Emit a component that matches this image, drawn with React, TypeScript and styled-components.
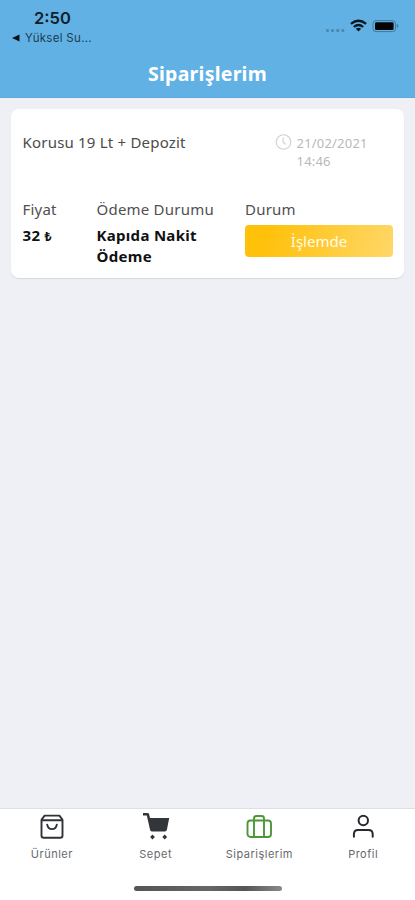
import React from "react";
import styled, { createGlobalStyle } from "styled-components";

const GlobalStyle = createGlobalStyle`
  * { box-sizing: border-box; }
  html, body { margin: 0; padding: 0; }
  body { font-family: "Noto Sans", "Open Sans", sans-serif; background: #eef0f5; }
`;

const Screen = styled.div`
  width: 100%;
  height: 900px;
  display: flex;
  flex-direction: column;
  overflow: hidden;
  background: #eef0f5;
`;

const Header = styled.header`
  height: 98px;
  flex: none;
  background: #61b1e4;
  border-bottom: 1px solid #60a8d6;
  display: flex;
  flex-direction: column;
`;

const StatusBar = styled.div`
  height: 50px;
  display: flex;
  justify-content: space-between;
  font-family: Inter, sans-serif;
  color: #10202c;
`;

const StatusLeft = styled.div`
  padding: 8px 0 0 11px;
`;

const Time = styled.div`
  font-size: 16.5px;
  line-height: 20px;
  font-weight: 600;
  padding-left: 23px;
`;

const BackApp = styled.div`
  display: flex;
  align-items: center;
  gap: 5px;
  font-size: 11.5px;
  line-height: 14px;
  letter-spacing: 0.3px;
  margin-top: 3px;
  color: #1d3c52;
`;

const StatusIcons = styled.div`
  display: flex;
  height: 16px;
  margin: 18px 16px 0 0;
  svg { display: block; }
`;

const Title = styled.h1`
  margin: 8px 0 0;
  text-align: center;
  color: #fff;
  font-size: 19.5px;
  line-height: 32px;
  font-weight: 700;
  letter-spacing: 0.25px;
`;

const Content = styled.main`
  flex: 1;
  padding: 11px 11px 0;
`;

const Card = styled.article`
  height: 169px;
  border-radius: 8px;
  background: #fff;
  box-shadow: 0 1px 1px rgba(0, 0, 0, 0.1);
  padding: 23px 11px 0 11.5px;
`;

const CardTop = styled.div`
  display: flex;
  height: 66.500px;
`;

const Product = styled.div`
  width: 252px;
  font-size: 15px;
  line-height: 21px;
  letter-spacing: 0.2px;
  color: #4b4b4b;
`;

const DateBox = styled.div`
  display: flex;
  gap: 5px;
  color: #b9b9b9;
  font-size: 13px;
  line-height: 18px;
  letter-spacing: 0.2px;
  padding-top: 1.5px;
  svg { flex: none; }
`;

const DateText = styled.div`
  width: 80px;
`;

const Details = styled.div`
  display: grid;
  grid-template-columns: 74px 148.5px 148px;
`;

const Label = styled.div`
  font-size: 15px;
  line-height: 21px;
  letter-spacing: 0.22px;
  color: #505050;
`;

const Value = styled.div`
  margin-top: 5px;
  width: 120px;
  font-size: 15px;
  line-height: 21px;
  letter-spacing: 0.3px;
  font-weight: 700;
  color: #111;
`;

const Currency = styled.span`
  font-size: 12.5px;
`;

const StatusButton = styled.div`
  height: 32px;
  margin-top: 5.500px;
  border-radius: 4px;
  background: linear-gradient(105deg, #ffc10a 15%, #ffd768 100%);
  color: #fffbea;
  font-size: 15px;
  line-height: 32px;
  text-align: center;
`;

const TabBar = styled.nav`
  height: 92px;
  flex: none;
  background: #fff;
  border-top: 1px solid #dedfe3;
  display: flex;
  flex-direction: column;
  justify-content: space-between;
  align-items: center;
`;

const Tabs = styled.div`
  width: 100%;
  display: grid;
  grid-template-columns: repeat(4, 1fr);
`;

const Tab = styled.div`
  display: flex;
  flex-direction: column;
  align-items: center;
  padding-top: 3px;
  font-family: Inter, sans-serif;
  font-size: 11px;
  line-height: 14px;
  letter-spacing: 0.5px;
  color: #66696d;
  svg { display: block; margin-bottom: 7px; }
`;

const HomeIndicator = styled.div`
  width: 148px;
  height: 5px;
  border-radius: 3px;
  margin-bottom: 9px;
  background: linear-gradient(90deg, #555, #666 50%, #555 75%, #8a8a8a);
`;

const StatusGlyphs = () => (
  <svg width="75" height="16" viewBox="0 0 75 16">
    <g fill="#4a89b1">
      <rect x="2" y="11" width="3" height="3" rx="1" />
      <rect x="7" y="11" width="3" height="3" rx="1" />
      <rect x="12.3" y="11" width="3" height="3" rx="1" />
      <rect x="17.4" y="11" width="3" height="3" rx="1" />
    </g>
    <g fill="none" stroke="#0b1822" strokeWidth="2.2">
      <path d="M26.9 5.8Q34.5 -.3 42.1 5.8" />
      <path d="M29.8 9Q34.5 5 39.2 9" />
    </g>
    <path d="M31.800 10.800Q34.500 8.800 37.200 10.800L34.500 13.400Z" fill="#0b1822" />
    <rect x="49" y="2.6" width="22.5" height="11" rx="3" fill="none" stroke="#40789a" />
    <rect x="51" y="4.3" width="18.6" height="7.7" rx="1.3" fill="#020406" />
    <path d="M72.8 6v4q1.6-.6 1.6-2t-1.6-2" fill="#40789a" />
  </svg>
);

const ClockIcon = () => (
  <svg width="17" height="17" viewBox="0 0 17 17" fill="none" stroke="#cfcfcf" strokeWidth="1.1">
    <circle cx="8.5" cy="8" r="7.3" />
    <path d="M8.1 3.6v4.7l2.8 2.1" />
  </svg>
);

const BagIcon = () => (
  <svg width="26" height="28" viewBox="0 0 26 28" fill="none" stroke="#303238" strokeWidth="1.9" strokeLinejoin="round" strokeLinecap="round">
    <path d="M2.500 7.800L5.600 3.600h14.800l3.100 4.200v15.600q0 2.300-2.300 2.300H4.800q-2.300 0-2.300-2.300ZM3 8.200h20M8.200 12.600c1 6 8.600 6 9.600 0" />
  </svg>
);

const CartIcon = () => (
  <svg width="28" height="28" viewBox="0 0 28 28" fill="#32363a">
    <path d="M1 1h4.500q1.300 0 1.600 1.300L8 6h19.200l-2.300 11.800q-.3 1.800-2.100 1.800H10.200q-1.700 0-2.100-1.700L4.800 3.400H1Z" />
    <path d="M10.500 22.600l2.400 2.400-2.400 2.400L8.100 25ZM22.700 22.600l2.400 2.400-2.400 2.400-2.400-2.400Z" />
  </svg>
);

const CaseIcon = () => (
  <svg width="26" height="28" viewBox="0 0 26 28" fill="none" stroke="#4c9836" strokeWidth="1.9">
    <rect x="1.500" y="8.500" width="23.500" height="16.500" rx="3" />
    <path d="M8 25V6.500q0-2.500 2.500-2.500h5Q18 4 18 6.500V25" />
  </svg>
);

const UserIcon = () => (
  <svg width="22" height="28" viewBox="0 0 22 28" fill="none" stroke="#28292d" strokeWidth="2" strokeLinecap="round">
    <circle cx="11.300" cy="8.500" r="4.700" />
    <path d="M1.900 24.700v-2.500q0-4.200 4.200-4.200h10.400q4.200 0 4.200 4.200v2.500" />
  </svg>
);

const BackArrow = () => (
  <svg width="9" height="8" viewBox="0 0 9 8">
    <path d="M1 4l7.5-3.6v7.200Z" fill="#07131c" />
  </svg>
);

export default function App() {
  return (
    <>
      <GlobalStyle />
      <Screen>
        <Header>
          <StatusBar>
            <StatusLeft>
              <Time>2:50</Time>
              <BackApp><BackArrow />Yüksel Su...</BackApp>
            </StatusLeft>
            <StatusIcons><StatusGlyphs /></StatusIcons>
          </StatusBar>
          <Title>Siparişlerim</Title>
        </Header>
        <Content>
          <Card>
            <CardTop>
              <Product>Korusu 19 Lt + Depozit</Product>
              <DateBox>
                <ClockIcon />
                <DateText>21/02/2021 14:46</DateText>
              </DateBox>
            </CardTop>
            <Details>
              <div><Label>Fiyat</Label><Value>32 <Currency>₺</Currency></Value></div>
              <div><Label>Ödeme Durumu</Label><Value>Kapıda Nakit Ödeme</Value></div>
              <div><Label>Durum</Label><StatusButton>İşlemde</StatusButton></div>
            </Details>
          </Card>
        </Content>
        <TabBar>
          <Tabs>
            <Tab><BagIcon />Ürünler</Tab>
            <Tab><CartIcon />Sepet</Tab>
            <Tab><CaseIcon />Siparişlerim</Tab>
            <Tab><UserIcon />Profil</Tab>
          </Tabs>
          <HomeIndicator />
        </TabBar>
      </Screen>
    </>
  );
}
